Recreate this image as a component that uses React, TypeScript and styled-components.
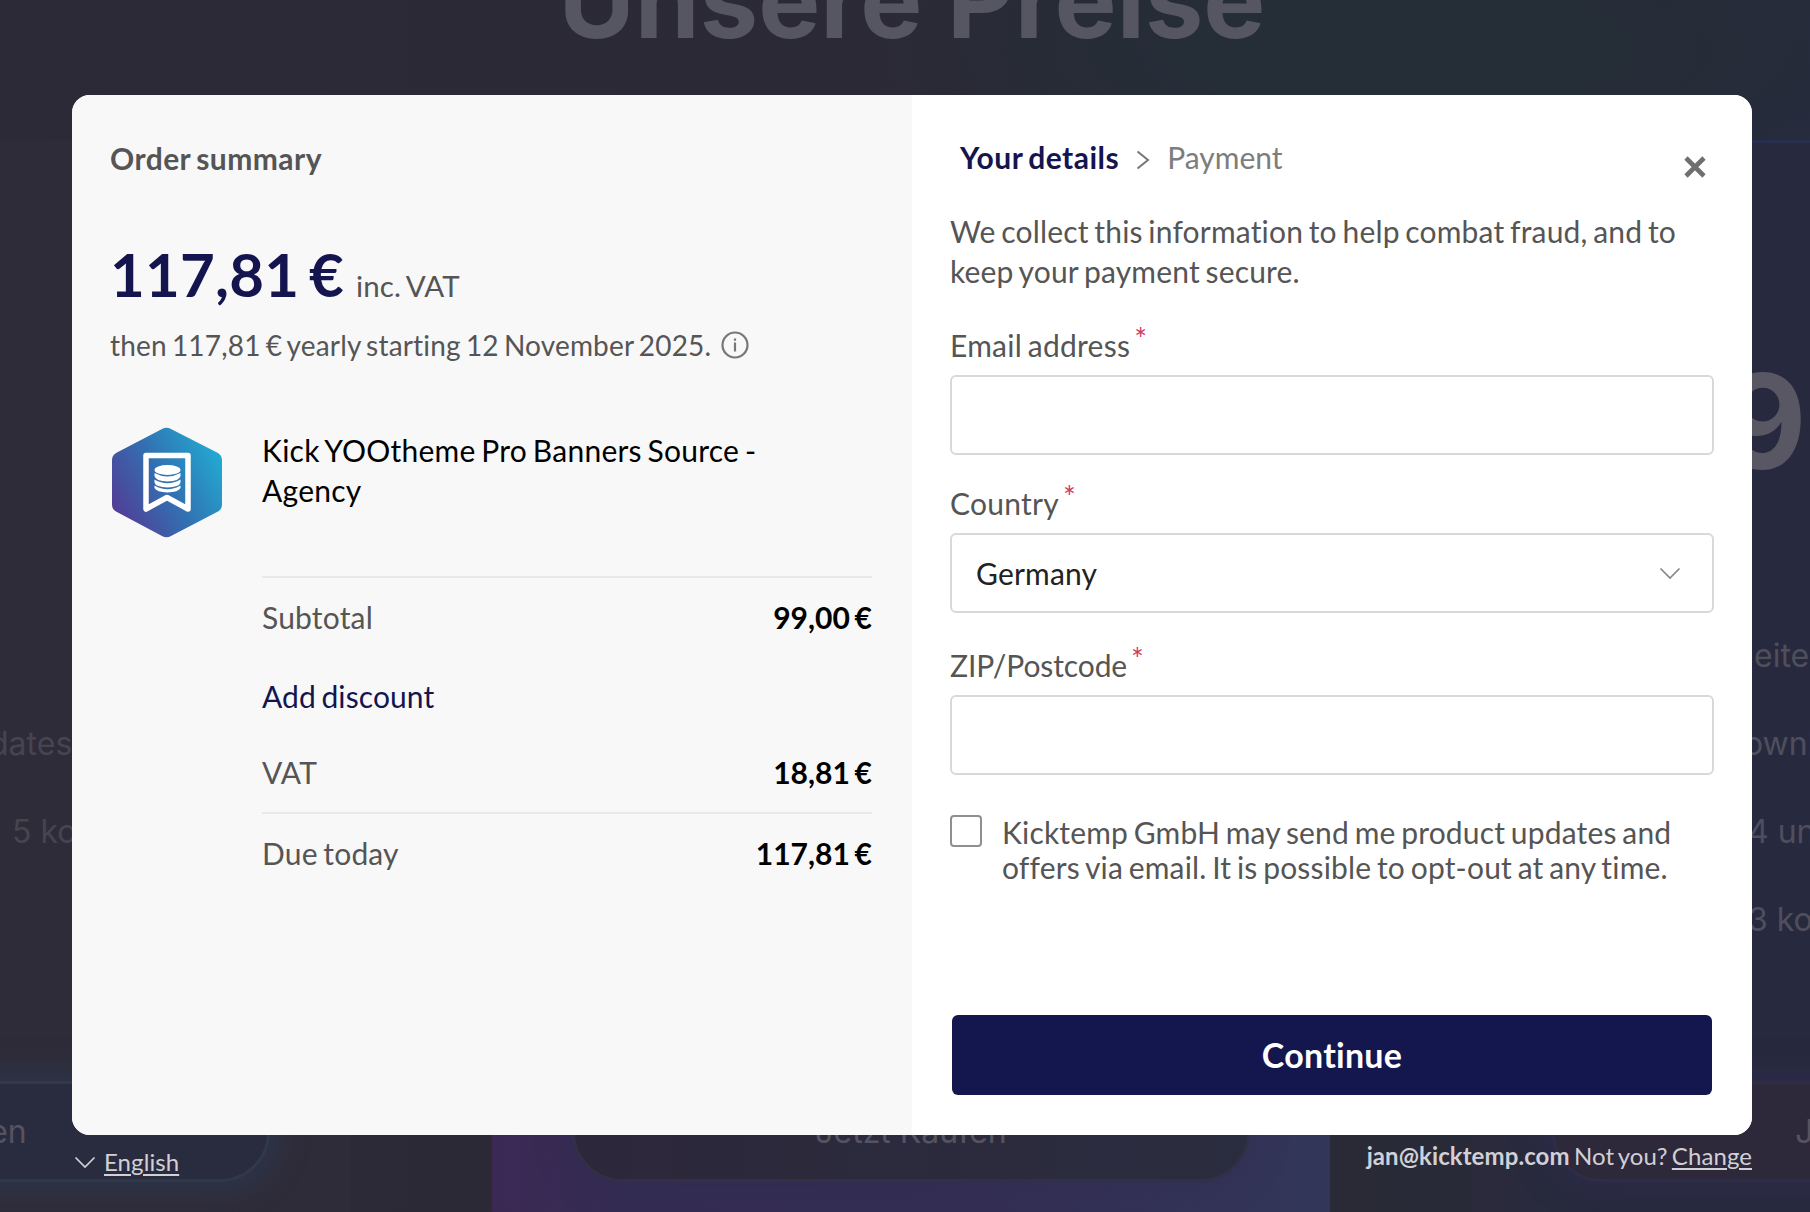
import React from "react";
import styled, { createGlobalStyle } from "styled-components";

const Global = createGlobalStyle`
  * { box-sizing: border-box; }
  body { margin: 0; background: #2b2a36; font-family: Lato, sans-serif; }
  h1, h2, p { margin: 0; }
`;

const Screen = styled.div`
  position: relative;
  width: 1810px;
  height: 1212px;
  overflow: hidden;
`;

const PricingPage = styled.div`
  height: 1212px;
  overflow: hidden;
  display: flex;
  flex-direction: column;
  font-family: Inter, sans-serif;
  color: #565562;
  background:
    radial-gradient(ellipse 560px 170px at 1400px 50px, #252d37 40%, transparent),
    radial-gradient(ellipse 220px 620px at 1810px 380px, #262a44, transparent),
    linear-gradient(90deg, #2b2a36 0%, #2c2936 50%, #282b38 100%);
`;

const PageTitle = styled.h1`
  height: 190px;
  flex: none;
  margin-top: -50px;
  padding-left: 14px;
  text-align: center;
  font-size: 104.3px;
  line-height: 100px;
  font-weight: 700;
`;

const Plans = styled.div`
  display: grid;
  grid-template-columns: 838px 838px 838px;
  gap: 142px;
  margin-left: -488px;
  flex: 1;
`;

const Plan = styled.div<{ $bg: string; $text: string; $edge?: string }>`
  display: flex;
  flex-direction: column;
  padding: 0 80px 30px;
  background: ${(p) => p.$bg};
  color: ${(p) => p.$text};
  box-shadow: inset 0 3px 0 ${(p) => p.$edge ?? "transparent"};
`;

const PlanPrice = styled.div`
  margin: 206px 0 116px 169px;
  font-size: 132px;
  line-height: 150px;
  font-weight: 700;
  color: #595764;
`;

const Features = styled.div<{ $top?: number }>`
  margin-top: ${(p) => p.$top ?? 0}px;
`;

const Feature = styled.div<{ $indent: number }>`
  height: 88px;
  padding-left: ${(p) => p.$indent}px;
  line-height: 88px;
  font-size: 32px;
  white-space: nowrap;
`;

const PlanButton = styled.div<{ $bg: string; $edge: string; $glow: string }>`
  height: 101px;
  margin-top: auto;
  display: flex;
  justify-content: center;
  align-items: center;
  border-radius: 50px;
  font-size: 32px;
  color: #565361;
  background: ${(p) => p.$bg};
  border: 3px solid ${(p) => p.$edge};
  box-shadow: 0 0 24px 14px ${(p) => p.$glow};
`;

const Overlay = styled.div`
  position: absolute;
  inset: 0;
  padding: 95px 58px 0 72px;
  letter-spacing: 0.18px;
  word-spacing: -2.2px;
  font-variant-ligatures: none;
`;

const Modal = styled.div`
  height: 1040px;
  display: grid;
  grid-template-columns: 840px 840px;
  border-radius: 18px;
  overflow: hidden;
  background: #fff;
`;

const Summary = styled.section`
  background: #f8f8f8;
  padding: 44px 40px 0 38px;
  color: #555;
`;

const SectionTitle = styled.h2`
  font-size: 30px;
  line-height: 40px;
  letter-spacing: 0.45px;
  font-weight: 700;
  color: #555;
  margin-top: -1px;
`;

const PriceRow = styled.div`
  display: flex;
  align-items: baseline;
  margin-top: 51px;
  height: 90px;
  line-height: 90px;
  font-size: 29.5px;
`;

const Price = styled.span`
  font-size: 60px;
  font-weight: 700;
  word-spacing: -5px;
  color: #14154f;
  margin-right: 12px;
`;

const Renewal = styled.div`
  display: flex;
  align-items: center;
  gap: 10px;
  height: 40px;
  margin-top: 6px;
  font-size: 28px;
`;

const Product = styled.div`
  display: flex;
  gap: 40px;
  margin-top: 62px;
  padding-left: 1px;
  height: 149px;
  font-size: 30px;
  line-height: 40px;
  color: #000;
`;

const ProductName = styled.p`
  padding-top: 3px;
  letter-spacing: 0.25px;
`;

const Totals = styled.div`
  margin-left: 152px;
`;

const Line = styled.div<{ $h: number; $rule?: boolean }>`
  display: flex;
  justify-content: space-between;
  height: ${(p) => p.$h}px;
  line-height: 79px;
  font-size: 30px;
  border-top: ${(p) => (p.$rule ? "2px solid #e9e9e9" : "0")};
`;

const Amount = styled.span`
  font-weight: 700;
  letter-spacing: 0;
  word-spacing: -2.5px;
  color: #000;
`;

const Discount = styled.span`
  letter-spacing: 0.1px;
  color: #14154f;
`;

const Details = styled.section`
  display: flex;
  flex-direction: column;
  background: #fff;
  padding: 42px 38px 0 38px;
  color: #555;
  font-size: 30px;
  line-height: 40px;
`;

const Header = styled.div`
  display: flex;
  justify-content: space-between;
  height: 74px;
`;

const Steps = styled.div`
  display: flex;
  padding-left: 10px;
`;

const Step = styled.span<{ $active?: boolean }>`
  font-weight: ${(p) => (p.$active ? 700 : 400)};
  letter-spacing: ${(p) => (p.$active ? 0.48 : 0)}px;
  color: ${(p) => (p.$active ? "#14154f" : "#7d7d7d")};
`;

const StepArrow = styled.svg`
  width: 14px;
  height: 20px;
  margin: 13px 17px 0 17px;
`;

const Close = styled.svg`
  width: 22px;
  height: 22px;
  margin: 19px 8px 0 0;
`;

const Label = styled.div<{ $top: number; $spacing?: number }>`
  display: flex;
  height: 50px;
  margin-top: ${(p) => p.$top}px;
  letter-spacing: ${(p) => p.$spacing ?? 0.25}px;
`;

const Required = styled.span`
  color: #d43a5c;
  font-size: 30px;
  line-height: 26px;
  margin-left: 4px;
`;

const Field = styled.div`
  display: flex;
  align-items: center;
  justify-content: space-between;
  height: 80px;
  padding: 0 31px 0 24px;
  border: 2px solid #d9d9d9;
  border-radius: 6px;
  color: #222;
`;

const Chevron = styled.svg`
  width: 22px;
  height: 13px;
`;

const Consent = styled.div`
  display: flex;
  gap: 20px;
  margin-top: 40px;
  line-height: 35px;
`;

const Checkbox = styled.span`
  flex: none;
  width: 32px;
  height: 32px;
  border: 2px solid #8f8f8f;
  border-radius: 4px;
`;

const ConsentText = styled.p`
  white-space: nowrap;
`;

const Continue = styled.button`
  height: 80px;
  width: 760px;
  margin: auto 0 40px 2px;
  padding: 0 0 2px;
  border: 0;
  border-radius: 6px;
  background: #14174e;
  color: #fff;
  font: 700 34px Lato, sans-serif;
  letter-spacing: 0.25px;
  font-variant-ligatures: none;
`;

const Footer = styled.div`
  display: flex;
  justify-content: space-between;
  padding: 6px 0 0 2px;
  font-size: 24px;
  line-height: 30px;
  letter-spacing: 0.08px;
  word-spacing: -2px;
  color: #d0d0d6;
`;

const Language = styled.div`
  display: flex;
  gap: 8px;
  align-items: center;
  margin-top: 6px;
`;

const Link = styled.span`
  text-decoration: underline;
  text-underline-offset: 3px;
`;

const ChevronDown = ({ color }: { color: string }) => (
  <Chevron viewBox="0 0 22 13" fill="none" stroke={color} strokeWidth="1.7">
    <path d="M1.5 1.5 11 11 20.5 1.5" />
  </Chevron>
);

const HexBadge = styled.svg`
  flex: none;
  width: 111px;
  height: 111px;
`;

const ProductIcon = () => (
  <HexBadge viewBox="0 0 111 111">
    <defs>
      <linearGradient id="hex" x1="0" y1="0.8" x2="1" y2="0.25">
        <stop offset="0" stopColor="#543a93" />
        <stop offset="0.5" stopColor="#3270b2" />
        <stop offset="1" stopColor="#22abd2" />
      </linearGradient>
    </defs>
    <path d="M51 2Q55.5-.5 60 2L107 26Q111 28.5 111 33V78Q111 82 107 84.5L60 109Q55.5 111.5 51 109L5 84.5Q1 82 1 78V33Q1 28.5 5 26Z" fill="url(#hex)" />
    <path d="M35 28.5H77V82L56 70.5 35 82Z" fill="none" stroke="#fff" strokeWidth="5.5" strokeLinejoin="round" />
    <g fill="#fff">
      <ellipse cx="56.500" cy="43" rx="13" ry="5" />
      <path d="M43.500 46Q56.500 53 69.500 46V49Q68.500 54 56.500 54.500 44.500 54 43.500 49Z" />
      <path d="M43.500 52.500Q56.500 60 69.500 52.500V55.500Q68.500 60 56.500 60.500 44.500 60 43.500 55.500Z" />
      <path d="M43.500 58.500Q56.500 66 69.500 58.500V61Q67.500 65 56.500 65.500 45.500 65 43.500 61Z" />
    </g>
  </HexBadge>
);

export default function App() {
  return (
    <>
      <Global />
      <Screen>
        <PricingPage>
          <PageTitle>Unsere Preise</PageTitle>
          <Plans>
            <Plan $bg="#2f2c39" $text="#474451">
              <Features $top={560}>
                <Feature $indent={397}>dates</Feature>
                <Feature $indent={420}>5 ko</Feature>
              </Features>
              <PlanButton $bg="#292c3e" $edge="#2f394a" $glow="#2d3346">Jetzt Kaufen</PlanButton>
            </Plan>
            <Plan $bg="linear-gradient(90deg, #3b2954 0, #352c54 14%, #342e54 60%, #32375a 100%)" $text="#565361">
              <PlanButton $bg="linear-gradient(90deg, #2d273a, #2a2d3f)" $edge="#322f47" $glow="#322d5060">Jetzt Kaufen</PlanButton>
            </Plan>
            <Plan $bg="linear-gradient(90deg, #2b2a3c, #272a3e 15%)" $text="#504e5c" $edge="#272e4e">
              <PlanPrice>9</PlanPrice>
              <Features>
                <Feature $indent={202}>eite</Feature>
                <Feature $indent={192}>ownl</Feature>
                <Feature $indent={196}>4 un</Feature>
                <Feature $indent={196}>3 ko</Feature>
              </Features>
              <PlanButton $bg="#2d283a" $edge="#2d2d49" $glow="#2c2a46">Jetzt Kaufen</PlanButton>
            </Plan>
          </Plans>
        </PricingPage>
        <Overlay>
          <Modal>
            <Summary>
              <SectionTitle>Order summary</SectionTitle>
              <PriceRow>
                <Price>117,81 €</Price>
                <span>inc. VAT</span>
              </PriceRow>
              <Renewal>
                <span>then 117,81 € yearly starting 12 November 2025.</span>
                <svg width="28" height="28" viewBox="0 0 28 28" fill="none" stroke="#777" strokeWidth="2.2">
                  <circle cx="14" cy="14" r="12.500" />
                  <path d="M14 11.500V20.500M14 7.500V9.700" />
                </svg>
              </Renewal>
              <Product>
                <ProductIcon />
                <ProductName>Kick YOOtheme Pro Banners Source -<br />Agency</ProductName>
              </Product>
              <Totals>
                <Line $h={81} $rule><span>Subtotal</span><Amount>99,00 €</Amount></Line>
                <Line $h={76}><Discount>Add discount</Discount></Line>
                <Line $h={79}><span>VAT</span><Amount>18,81 €</Amount></Line>
                <Line $h={81} $rule><span>Due today</span><Amount>117,81 €</Amount></Line>
              </Totals>
            </Summary>
            <Details>
              <Header>
                <Steps>
                  <Step $active>Your details</Step>
                  <StepArrow viewBox="0 0 14 20" fill="none" stroke="#777" strokeWidth="2">
                    <path d="M1.500 1.500 12 10 1.500 18.500" />
                  </StepArrow>
                  <Step>Payment</Step>
                </Steps>
                <Close viewBox="0 0 22 22" stroke="#6f6f6f" strokeWidth="4.600">
                  <path d="M2 2 20 20M20 2 2 20" />
                </Close>
              </Header>
              <p>We collect this information to help combat fraud, and to<br />keep your payment secure.</p>
              <Label $top={34}>Email address<Required>*</Required></Label>
              <Field />
              <Label $top={28}>Country<Required>*</Required></Label>
              <Field>Germany<ChevronDown color="#888" /></Field>
              <Label $top={32} $spacing={-0.1}>ZIP/Postcode<Required>*</Required></Label>
              <Field />
              <Consent>
                <Checkbox />
                <ConsentText>Kicktemp GmbH may send me product updates and<br />offers via email. It is possible to opt-out at any time.</ConsentText>
              </Consent>
              <Continue>Continue</Continue>
            </Details>
          </Modal>
          <Footer>
            <Language><ChevronDown color="#d0d0d6" /><Link>English</Link></Language>
            <div><b>jan@kicktemp.com</b> Not you? <Link>Change</Link></div>
          </Footer>
        </Overlay>
      </Screen>
    </>
  );
}
